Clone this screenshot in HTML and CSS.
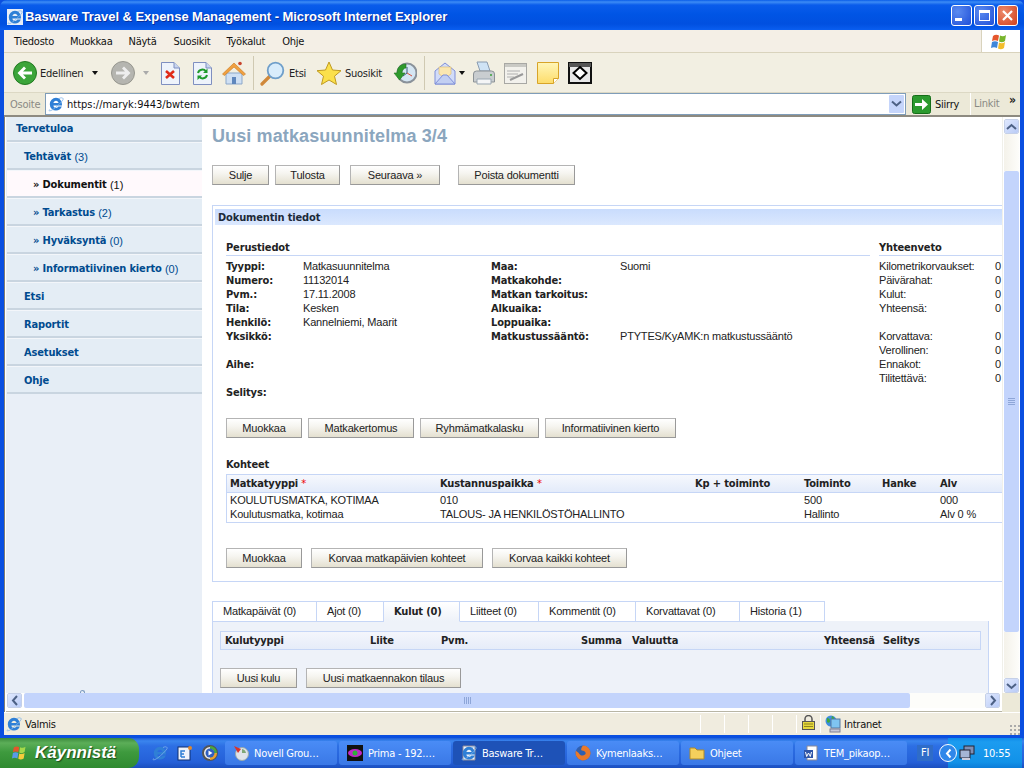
FILE: index.html
```html
<!DOCTYPE html>
<html lang="fi">
<head>
<meta charset="utf-8">
<title>Basware Travel &amp; Expense Management</title>
<link rel="stylesheet" href="styles.css">
</head>
<body>
<svg class="defs" width="0" height="0">
  <defs>
    <symbol id="ie" viewBox="0 0 16 16">
      <path fill-rule="evenodd" d="M8 1.800a6.200 6.200 0 0 0-6.200 6.400A6.200 6.200 0 0 0 8 14.500c2.800 0 4.900-1.500 5.800-4H10.400c-.5.900-1.300 1.400-2.400 1.400-1.500 0-2.500-1-2.600-2.500h8.600c.2-4.200-2.400-7.600-6-7.600zM5.400 7c.2-1.300 1.300-2.300 2.600-2.300S10.400 5.700 10.600 7z" fill="#2f7fd6"/>
      <path d="M1.500 13.500C0 15.800 3 15 6 12.700c3.500-2.600 7.500-6.500 9-9 .8-1.500-1-2.700-4-1.200" fill="none" stroke="#7fb4ea" stroke-width=".8"/>
    </symbol>
    <symbol id="doc" viewBox="0 0 19 23">
      <path d="M.5.500H13L18.500 6V22.500H.5z" fill="#eef3fb" stroke="#7f8fc0"/>
      <path d="M13 .5V6h5.500" fill="#c8d4ef" stroke="#7f8fc0"/>
    </symbol>
  </defs>
</svg>
<div class="desktop">
  <div class="window">
    <header class="titlebar">
      <svg class="title-icon"><use href="#ie"/></svg>
      <span class="title-text">Basware Travel &amp; Expense Management - Microsoft Internet Explorer</span>
      <div class="win-btns">
        <span class="wbtn"><i class="w-min"></i></span>
        <span class="wbtn"><i class="w-max"></i></span>
        <span class="wbtn wbtn-close"><svg width="13" height="13" viewBox="0 0 13 13"><path d="M2 2l9 9M11 2l-9 9" stroke="#fff" stroke-width="2.200"/></svg></span>
      </div>
    </header>
    <div class="chrome">
      <nav class="menubar">
        <span class="m1">Tiedosto</span><span class="m2">Muokkaa</span><span class="m3">Näytä</span><span class="m4">Suosikit</span><span class="m5">Työkalut</span><span class="m6">Ohje</span>
        <div class="flag">
          <svg width="22" height="20" viewBox="0 0 22 20"><path d="M3 4c2-1.500 4-1.500 6-.5L8 9C6 8 4 8 2 9z" fill="#e5562c"/><path d="M10 3.500c2 1 4 1 6-.5l-1 6c-2 1.500-4 1.500-6 .5z" fill="#78b52d"/><path d="M2 10c2-1 4-1 6 0l-1 6c-2-1-4-1-6 0z" fill="#3f86d9"/><path d="M9 10.500c2 1 4 1 6-.5l-1 6c-2 1.500-4 1.500-6 .5z" fill="#f3bd2c"/></svg>
        </div>
      </nav>
      <div class="toolbar">
        <svg class="t-back" width="24" height="24" viewBox="0 0 24 24"><circle cx="12" cy="12" r="11.500" fill="#3ca53a" stroke="#237a22"/><path d="M4.500 12l6.500-6.500 2 2L10 10.500h9v3h-9l3 3-2 2z" fill="#fff"/></svg>
        <span class="t-edellinen">Edellinen</span>
        <i class="caret t-c1"></i>
        <svg class="t-fwd" width="24" height="24" viewBox="0 0 24 24"><circle cx="12" cy="12" r="11.500" fill="#b5b5b0" stroke="#97978f"/><path d="M19.500 12L13 5.500l-2 2 3 3H5v3h9l-3 3 2 2z" fill="#eee"/></svg>
        <i class="caret caret-off t-c2"></i>
        <svg class="t-stop" width="19" height="23"><use href="#doc"/><path d="M5 9l8 7M13 9l-8 7" stroke="#e02a18" stroke-width="2.600"/></svg>
        <svg class="t-ref" width="19" height="23"><use href="#doc"/><path d="M5 11a4.500 4.500 0 0 1 8-1.500M14 13a4.500 4.500 0 0 1-8 1.500" fill="none" stroke="#1f9a2c" stroke-width="2"/><path d="M14.500 6.500v4.500H10zM4.500 18v-4.500H9z" fill="#1f9a2c"/></svg>
        <svg class="t-home" width="24" height="25" viewBox="0 0 24 25"><path d="M4 12v11h16V12z" fill="#cfe0f4" stroke="#8ba7c9"/><path d="M10 23v-7h4v7z" fill="#5f87bd"/><path d="M0.500 13L12 2l11.500 11-2 1.500L12 6 2.500 14.500z" fill="#f0a040" stroke="#c87820" stroke-width=".6"/><circle cx="18" cy="2.500" r="1.800" fill="#c8442c"/></svg>
        <i class="sep t-s1"></i>
        <svg class="t-search" width="25" height="25" viewBox="0 0 25 25"><path d="M2 23l8-8" stroke="#d0883a" stroke-width="3.200" stroke-linecap="round"/><circle cx="15.500" cy="9.500" r="7.800" fill="#d8ecfb" stroke="#6f9fca" stroke-width="1.800"/></svg>
        <span class="t-etsi">Etsi</span>
        <svg class="t-star" width="26" height="25" viewBox="0 0 26 25"><path d="M13 1l3.500 8 8.500.7-6.500 5.500 2 8.300L13 19l-7.500 4.500 2-8.300L1 9.700 9.500 9z" fill="#fbe04b" stroke="#c09a20"/></svg>
        <span class="t-suosikit">Suosikit</span>
        <svg class="t-hist" width="24" height="24" viewBox="0 0 24 24"><circle cx="14" cy="12" r="9.500" fill="#d5e6f3" stroke="#8a929a" stroke-width="2"/><path d="M14 6v6l-4 3" stroke="#3a5f7f" fill="none"/><path d="M14 12l5 3" stroke="#d8503c" fill="none"/><path d="M13 3C7 3 4 7 4 12H1l5.500 7 5.500-7H9c0-3 2-5 4-5z" fill="#2f9a2c" stroke="#1f7420" stroke-width=".6"/></svg>
        <i class="sep t-s2"></i>
        <svg class="t-mail" width="22" height="23" viewBox="0 0 22 23"><path d="M1 9l10-8 10 8v13H1z" fill="#d2dcf8" stroke="#7f8fd8"/><path d="M5 5h12v7l-6 4-6-4z" fill="#fbe7b0" stroke="#d8b870" stroke-width=".6"/><path d="M1 22l8-9h4l8 9z" fill="#c2cff2" stroke="#7f8fd8"/></svg>
        <i class="caret t-c3"></i>
        <svg class="t-print" width="24" height="25" viewBox="0 0 24 25"><path d="M5 1h10l3 9H8z" fill="#cfe3f5" stroke="#8a9bb0"/><path d="M1.500 13q0-3 3-3h15q3 0 3 3v8h-21z" fill="#c9cdd0" stroke="#8c9296"/><path d="M5 18h14v5H5z" fill="#f4f5f6" stroke="#9aa7b2"/><circle cx="19" cy="14" r="1" fill="#3aa03a"/></svg>
        <svg class="t-edit" width="23" height="21" viewBox="0 0 23 21"><rect x=".5" y=".5" width="22" height="20" fill="#f2f1ec" stroke="#a8a8a4"/><path d="M1 1h21v3H1z" fill="#c9c9c4"/><path d="M3 8h13M3 11h11M3 14h7" stroke="#b0b0b0"/><path d="M6 17l13-6" stroke="#999" stroke-width="2"/></svg>
        <svg class="t-note" width="22" height="22" viewBox="0 0 22 22"><defs><linearGradient id="ng" x1="0" y1="0" x2="0" y2="1"><stop offset="0" stop-color="#fff6b8"/><stop offset="1" stop-color="#fddc6a"/></linearGradient></defs><path d="M.5.500h21v16l-5 5H.5z" fill="url(#ng)" stroke="#d8a428"/><path d="M16.500 21.500v-5h5" fill="#fff" stroke="#d8a428"/></svg>
        <svg class="t-diamond" width="24" height="22" viewBox="0 0 24 22"><rect x="1" y="1" width="22" height="20" fill="#e8e8e8" stroke="#111" stroke-width="2"/><path d="M1 1h22v4H1z" fill="#555"/><path d="M12 5l6.500 6L12 17l-6.500-6z" fill="#fff" stroke="#000" stroke-width="2"/></svg>
      </div>
      <div class="addressbar">
        <span class="addr-label">Osoite</span>
        <div class="addr-input">
          <svg class="addr-icon"><use href="#ie"/></svg>
          <span class="addr-url">https://maryk:9443/bwtem</span>
          <span class="addr-drop"><svg width="11" height="8" viewBox="0 0 11 8"><path d="M1 1.500l4.500 4 4.500-4" fill="none" stroke="#4d6185" stroke-width="2"/></svg></span>
        </div>
        <svg class="go-icon" width="19" height="19" viewBox="0 0 19 19"><rect x=".5" y=".5" width="18" height="18" rx="2" fill="#2b9a2e" stroke="#156d18"/><path d="M3 8h7V4l6 5.500-6 5.500v-4H3z" fill="#fff"/></svg>
        <span class="go-text">Siirry</span>
        <span class="links">Linkit</span>
        <span class="links-more">»</span>
      </div>
    </div>
    <div class="viewport">
      <div class="view-main">
        <aside class="sidebar">
          <a class="side-item lvl0">Tervetuloa</a>
          <a class="side-item lvl1">Tehtävät <span>(3)</span></a>
          <a class="side-item lvl2 active">» Dokumentit <span>(1)</span></a>
          <a class="side-item lvl2">» Tarkastus <span>(2)</span></a>
          <a class="side-item lvl2">» Hyväksyntä <span>(0)</span></a>
          <a class="side-item lvl2">» Informatiivinen kierto <span>(0)</span></a>
          <a class="side-item lvl1">Etsi</a>
          <a class="side-item lvl1">Raportit</a>
          <a class="side-item lvl1">Asetukset</a>
          <a class="side-item lvl1">Ohje</a>
          <i class="side-foot"></i>
        </aside>
        <main class="content">
          <h1 class="page-title">Uusi matkasuunnitelma 3/4</h1>
          <div class="btn-row row-top">
            <button class="btn">Sulje</button><button class="btn">Tulosta</button><button class="btn">Seuraava »</button><button class="btn">Poista dokumentti</button>
          </div>
          <section class="panel">
            <h2 class="panel-head">Dokumentin tiedot</h2>
            <div class="panel-body">
              <div class="info">
                <div class="info-main">
                  <h3 class="sec-head">Perustiedot</h3>
                  <div class="fields">
                    <div class="fcol">
                      <b>Tyyppi:</b><span>Matkasuunnitelma</span>
                      <b>Numero:</b><span>11132014</span>
                      <b>Pvm.:</b><span>17.11.2008</span>
                      <b>Tila:</b><span>Kesken</span>
                      <b>Henkilö:</b><span>Kannelniemi, Maarit</span>
                      <b>Yksikkö:</b><span></span>
                      <b class="gap-row">Aihe:</b><span class="gap-row"></span>
                      <b class="gap-row">Selitys:</b><span class="gap-row"></span>
                    </div>
                    <div class="fcol fcol2">
                      <b>Maa:</b><span>Suomi</span>
                      <b>Matkakohde:</b><span></span>
                      <b>Matkan tarkoitus:</b><span></span>
                      <b>Alkuaika:</b><span></span>
                      <b>Loppuaika:</b><span></span>
                      <b>Matkustussääntö:</b><span>PTYTES/KyAMK:n matkustussääntö</span>
                    </div>
                  </div>
                </div>
                <div class="info-side">
                  <h3 class="sec-head">Yhteenveto</h3>
                  <div class="sum">
                    <span>Kilometrikorvaukset:</span><span>0</span>
                    <span>Päivärahat:</span><span>0</span>
                    <span>Kulut:</span><span>0</span>
                    <span>Yhteensä:</span><span>0</span>
                    <span class="gap-row">Korvattava:</span><span class="gap-row">0</span>
                    <span>Verollinen:</span><span>0</span>
                    <span>Ennakot:</span><span>0</span>
                    <span>Tilitettävä:</span><span>0</span>
                  </div>
                </div>
              </div>
              <div class="btn-row row-doc">
                <button class="btn">Muokkaa</button><button class="btn">Matkakertomus</button><button class="btn">Ryhmämatkalasku</button><button class="btn">Informatiivinen kierto</button>
              </div>
              <h3 class="items-head">Kohteet</h3>
              <div class="items">
                <div class="items-row items-th">
                  <span>Matkatyyppi <em>*</em></span><span>Kustannuspaikka <em>*</em></span><span>Kp + toiminto</span><span>Toiminto</span><span>Hanke</span><span>Alv</span>
                </div>
                <div class="items-row">
                  <span>KOULUTUSMATKA, KOTIMAA</span><span>010</span><span></span><span>500</span><span></span><span>000</span>
                </div>
                <div class="items-row">
                  <span>Koulutusmatka, kotimaa</span><span>TALOUS- JA HENKILÖSTÖHALLINTO</span><span></span><span>Hallinto</span><span></span><span>Alv 0 %</span>
                </div>
              </div>
              <div class="btn-row row-items">
                <button class="btn">Muokkaa</button><button class="btn">Korvaa matkapäivien kohteet</button><button class="btn">Korvaa kaikki kohteet</button>
              </div>
            </div>
          </section>
          <div class="tabs">
            <span class="tab">Matkapäivät (0)</span><span class="tab">Ajot (0)</span><span class="tab tab-on">Kulut (0)</span><span class="tab">Liitteet (0)</span><span class="tab">Kommentit (0)</span><span class="tab">Korvattavat (0)</span><span class="tab">Historia (1)</span>
          </div>
          <section class="tab-panel">
            <div class="cost-head">
              <span>Kulutyyppi</span><span>Liite</span><span>Pvm.</span><span>Summa</span><span>Valuutta</span><span>Yhteensä</span><span>Selitys</span>
            </div>
            <div class="btn-row row-cost">
              <button class="btn">Uusi kulu</button><button class="btn">Uusi matkaennakon tilaus</button>
            </div>
          </section>
        </main>
        <div class="vscroll">
          <span class="sb-btn"><svg width="11" height="8" viewBox="0 0 11 8"><path d="M1 6l4.500-4L10 6" fill="none" stroke="#4d6185" stroke-width="2"/></svg></span>
          <span class="v-track-a"></span>
          <span class="v-thumb"><i class="grip-h"></i></span>
          <span class="v-track-b"></span>
          <span class="sb-btn"><svg width="11" height="8" viewBox="0 0 11 8"><path d="M1 2l4.500 4L10 2" fill="none" stroke="#4d6185" stroke-width="2"/></svg></span>
        </div>
      </div>
      <div class="hscroll">
        <span class="sb-btn"><svg width="8" height="11" viewBox="0 0 8 11"><path d="M6 1L2 5.500 6 10" fill="none" stroke="#4d6185" stroke-width="2"/></svg></span>
        <span class="h-thumb"><i class="grip-v"></i></span>
        <span class="h-track"></span>
        <span class="sb-btn"><svg width="8" height="11" viewBox="0 0 8 11"><path d="M2 1l4 4.500L2 10" fill="none" stroke="#4d6185" stroke-width="2"/></svg></span>
        <span class="h-corner"></span>
      </div>
    </div>
    <footer class="statusbar">
      <svg class="st-ie"><use href="#ie"/></svg>
      <span class="st-text">Valmis</span>
      <i class="st-cell"></i><i class="st-cell"></i><i class="st-cell"></i><i class="st-cell"></i>
      <span class="st-lock"><svg width="13" height="15" viewBox="0 0 13 15"><path d="M3 7V4a3.500 3.500 0 0 1 7 0v3" fill="none" stroke="#555" stroke-width="1.500"/><rect x=".5" y="6.500" width="12" height="8" fill="#e6d83c" stroke="#555"/><path d="M2 9h9M2 11.500h9" stroke="#8d8420"/></svg></span>
      <span class="st-zone"><svg width="16" height="18" viewBox="0 0 16 18"><circle cx="6" cy="6" r="5.500" fill="#3f8ee0"/><path d="M2 3c2 0 3 1 3 3S3 8 2 7zM7 1c2 1 3 2 2 4-2 0-3-1-2-4z" fill="#3fa83c"/><rect x="6" y="4" width="9" height="9" fill="#7fc4f2" stroke="#5577a0"/><rect x="5" y="14" width="10" height="3" fill="#c9c9d8" stroke="#7f7f95"/></svg>Intranet</span>
      <span class="st-grip"></span>
    </footer>
  </div>
  <div class="taskbar">
    <div class="start">
      <svg width="20" height="18" viewBox="0 0 22 20"><path d="M3 4c2-1.500 4-1.500 6-.5L8 9C6 8 4 8 2 9z" fill="#e5562c"/><path d="M10 3.500c2 1 4 1 6-.5l-1 6c-2 1.500-4 1.500-6 .5z" fill="#a5d84a"/><path d="M2 10c2-1 4-1 6 0l-1 6c-2-1-4-1-6 0z" fill="#5a9ae8"/><path d="M9 10.500c2 1 4 1 6-.5l-1 6c-2 1.500-4 1.500-6 .5z" fill="#f6cc3c"/></svg>
      <span>Käynnistä</span>
    </div>
    <div class="quick">
      <svg width="16" height="16"><use href="#ie"/></svg>
      <svg width="16" height="16" viewBox="0 0 16 16"><rect x="1" y="2" width="12" height="13" fill="#eef3fb" stroke="#0f2f70"/><path d="M4 12V6h4M4 9h3M4 12h4" stroke="#2f7fd6" stroke-width="1.500" fill="none"/><circle cx="13" cy="3" r="2" fill="#e08a2c"/></svg>
      <svg width="16" height="16" viewBox="0 0 16 16"><circle cx="8" cy="8" r="7" fill="#eee" stroke="#555" stroke-width="2"/><path d="M8 1a7 7 0 0 1 7 7h-3a4 4 0 0 0-4-4z" fill="#4aa83c"/><path d="M15 8a7 7 0 0 1-7 7v-3a4 4 0 0 0 4-4z" fill="#e8a02c"/><circle cx="8" cy="8" r="4.500" fill="#2f5fc0"/><path d="M6.500 5.500l4 2.500-4 2.500z" fill="#fff"/></svg>
    </div>
    <div class="tasks">
      <span class="task"><svg width="16" height="16" viewBox="0 0 16 16"><circle cx="9" cy="9" r="6.500" fill="#dfe4ea" stroke="#9aa"/><path d="M9 4a5 5 0 0 1 4 4H9z" fill="#7fa878"/><path d="M1 1l7 3-3 4z" fill="#d8332a"/></svg><b>Novell Grou…</b></span>
      <span class="task"><svg width="16" height="16" viewBox="0 0 16 16"><rect width="16" height="16" fill="#111"/><ellipse cx="8" cy="8" rx="7" ry="4" fill="#c028c8"/><circle cx="8" cy="8" r="2.500" fill="#2fb03a"/></svg><b>Prima - 192.…</b></span>
      <span class="task task-on"><svg width="16" height="16" viewBox="0 0 16 16"><path d="M2 1h12v14H2z" fill="#eef3fb" stroke="#889"/><use href="#ie"/></svg><b>Basware Tr…</b></span>
      <span class="task"><svg width="16" height="16" viewBox="0 0 16 16"><circle cx="8" cy="8" r="7.500" fill="#2f5fb0"/><path d="M8 .5a7.500 7.500 0 1 1-7 5c1 2 2 1 3 3s4 3 6 1-1-4-3-4 0-4 1-5z" fill="#e9792a"/></svg><b>Kymenlaaks…</b></span>
      <span class="task"><svg width="16" height="16" viewBox="0 0 16 16"><path d="M1 3h5l2 2h7v9H1z" fill="#f4cf5c" stroke="#b08a28"/></svg><b>Ohjeet</b></span>
      <span class="task"><svg width="16" height="16" viewBox="0 0 16 16"><path d="M4 1h10v14H4z" fill="#fff" stroke="#889"/><rect x="1" y="5" width="9" height="8" fill="#2f55a8"/><path d="M2.500 7l1.200 4.500L5.500 8l1.800 3.500L8.500 7" fill="none" stroke="#fff"/></svg><b>TEM_pikaop…</b></span>
    </div>
    <span class="lang">FI</span>
    <span class="chev"><svg width="9" height="11" viewBox="0 0 9 11"><path d="M6.500 1.500L3 5.500l3.500 4" fill="none" stroke="#fff" stroke-width="2"/></svg></span>
    <div class="tray">
      <svg width="16" height="16" viewBox="0 0 16 16"><rect x="5" y="1" width="10" height="8" fill="#7f8fb5" stroke="#223"/><rect x="1" y="5" width="10" height="8" fill="#a5b5d5" stroke="#223"/><rect x="3" y="13" width="8" height="2" fill="#ccd"/></svg>
      <span>10:55</span>
    </div>
  </div>
</div>
</body>
</html>
```

FILE: styles.css
```css
* { box-sizing: border-box; }
html, body { margin: 0; padding: 0; }
body {
  width: 1024px;
  height: 768px;
  overflow: hidden;
  font-family: "Liberation Sans", sans-serif;
  font-size: 11px;
  letter-spacing: -.18px;
  color: #222;
}
.defs { display: block; height: 0; }
.desktop { display: flex; flex-direction: column; height: 768px; }

/* shared type: bold labels and browser chrome use the condensed face */
.panel-head, .sec-head, .fcol b, .items-head, .items-th, .tab-on, .cost-head, .side-item {
  font-family: "DejaVu Sans Condensed", "Liberation Sans", sans-serif;
  font-weight: bold;
  letter-spacing: -.15px;
}
.chrome, .statusbar, .taskbar {
  font-family: "DejaVu Sans Condensed", "Liberation Sans", sans-serif;
  letter-spacing: -.25px;
}

/* window frame */
.window {
  height: 738px;
  display: flex;
  flex-direction: column;
  background: #0a4fe0;
  padding: 0 4px 3px 4px;
}
.titlebar {
  height: 30px;
  margin: 0 -4px;
  padding: 3px 6px 0 7px;
  flex: none;
  display: flex;
  align-items: center;
  border-radius: 7px 7px 0 0;
  background: linear-gradient(#0a5de8 0, #3d8cf5 2px, #0a5ceb 5px, #0055e5 14px, #0150e0 24px, #0a5ef0 30px);
}
.title-icon { width: 16px; height: 16px; flex: none; background: #e8eef8; }
.title-text {
  margin-left: 2px;
  font: bold 13px "Liberation Sans", sans-serif;
  letter-spacing: -.05px;
  color: #fff;
  text-shadow: 1px 1px 0 #0a2f9c;
  white-space: nowrap;
}
.win-btns { margin-left: auto; display: flex; gap: 2px; margin-top: -3px; }
.wbtn {
  width: 21px;
  height: 21px;
  border: 1px solid #fff;
  border-radius: 3px;
  background: radial-gradient(circle at 30% 30%, #5b8bf0, #1f4fd8);
  display: flex;
  align-items: center;
  justify-content: center;
}
.wbtn-close { background: radial-gradient(circle at 30% 30%, #ec8a6c, #d2401c); }
.w-min { width: 7px; height: 3px; background: #fff; margin: 9px 7px 0 0; }
.w-max { width: 11px; height: 11px; border: 1px solid #fff; border-top-width: 3px; }
.chrome { flex: none; background: #f1eee0; }

/* menu */
.menubar {
  height: 23px;
  display: flex;
  align-items: center;
  background: #f4efe6;
  border-bottom: 1px solid #d9d3bd;
}
.menubar span { white-space: nowrap; color: #111; }
.m1 { margin-left: 10px; }
.m2 { margin-left: 16px; }
.m3 { margin-left: 16px; }
.m4 { margin-left: 17px; }
.m5 { margin-left: 16px; }
.m6 { margin-left: 17px; }
.flag {
  margin-left: auto;
  width: 39px;
  height: 22px;
  background: #fff;
  display: flex;
  align-items: center;
  justify-content: center;
  padding-top: 1px;
  border-left: 1px solid #d9d3bd;
}

/* toolbar */
.toolbar {
  height: 40px;
  display: flex;
  align-items: center;
  padding-top: 1px;
  background: #f2efe2;
  border-bottom: 1px solid #dcd8c4;
  color: #222;
}
.toolbar svg, .toolbar i { flex: none; }
.caret { width: 0; height: 0; border: 3.500px solid transparent; border-top: 4px solid #111; border-bottom: 0; }
.caret-off { border-top-color: #aaa; }
.sep { width: 1px; height: 34px; background: #cfc9b2; }
.t-back { margin-left: 9px; }
.t-edellinen { margin-left: 3px; width: 44px; }
.t-c1 { margin-left: 8px; }
.t-fwd { margin-left: 13px; }
.t-c2 { margin-left: 8px; }
.t-stop { margin-left: 12px; }
.t-ref { margin-left: 13px; }
.t-home { margin-left: 10px; }
.t-s1 { margin-left: 7px; }
.t-search { margin-left: 6px; }
.t-etsi { margin-left: 4px; width: 20px; }
.t-star { margin-left: 7px; }
.t-suosikit { margin-left: 3px; width: 38px; }
.t-hist { margin-left: 10px; }
.t-s2 { margin-left: 7px; }
.t-mail { margin-left: 9px; }
.t-c3 { margin-left: 3px; }
.t-print { margin-left: 7px; }
.t-edit { margin-left: 8px; }
.t-note { margin-left: 10px; }
.t-diamond { margin-left: 9px; }

/* address */
.addressbar {
  height: 24px;
  display: flex;
  align-items: center;
  background: #ece9d8;
  border-bottom: 2px solid #8d8a80;
}
.addr-label { margin-left: 6px; width: 35px; color: #8a8a84; }
.addr-input {
  width: 861px;
  height: 22px;
  display: flex;
  align-items: center;
  background: #fff;
  border: 1px solid #7f9db9;
  padding: 0 1px 0 2px;
}
.addr-icon { width: 16px; height: 16px; flex: none; }
.addr-url { margin-left: 3px; color: #111; letter-spacing: 0; }
.addr-drop {
  margin-left: auto;
  width: 15px;
  height: 18px;
  display: flex;
  align-items: center;
  justify-content: center;
  background: #c5d5fb;
  border-radius: 1px;
}
.go-icon { margin-left: 6px; flex: none; }
.go-text { margin-left: 4px; width: 35px; color: #111; }
.links { padding-left: 3px; border-left: 1px solid #fff; height: 22px; line-height: 22px; color: #8a8a84; width: 38px; }
.links-more { font-weight: bold; font-size: 12px; line-height: 10px; align-self: flex-start; margin: 2px 0 0 1px; }

/* viewport */
.viewport { flex: 1; min-height: 0; display: flex; flex-direction: column; background: #fff; padding-left: 1px; border-left: 1px solid #807e74; }
.view-main { flex: 1; min-height: 0; display: flex; }
.sidebar {
  width: 196px;
  flex: none;
  background: #e9eff7;
  display: flex;
  flex-direction: column;
  overflow: hidden;
  color: #004b8f;
}
.side-item {
  height: 28px;
  flex: none;
  display: flex;
  align-items: center;
  margin-left: 1px;
  padding-top: 2px;
  white-space: pre;
  background: #e4edf5;
  border-top: 1px solid #f3f6fa;
  border-bottom: 2px solid #c9d5e0;
}
.side-item span { font: 11px "Liberation Sans", sans-serif; letter-spacing: 0; }
.lvl0 { height: 25px; padding-left: 9px; padding-top: 0; border-top: 0; }
.lvl1 { padding-left: 17px; }
.lvl2 { padding-left: 26px; }
.active { background: #fff9fc; color: #111; }
.side-foot { margin-top: auto; margin-left: 74px; width: 5px; height: 3px; border: 1px solid #7f9cc0; border-bottom: 0; border-radius: 3px 3px 0 0; }

.content { width: 800px; flex: none; overflow: hidden; padding-left: 10px; }
.page-title {
  margin: 8px 0 0;
  height: 23px;
  font: bold 18px/23px "Liberation Sans", sans-serif;
  letter-spacing: .12px;
  color: #8ba6be;
  white-space: nowrap;
}
.btn-row { display: grid; grid-auto-flow: column; justify-content: start; height: 20px; }
.btn-row .btn { justify-self: end; }
.row-top { margin-top: 17px; grid-template-columns: 57px 65px 94px 129px; column-gap: 6px; }
.row-top .btn:nth-child(3) { width: 90px; }
.row-top .btn:nth-child(4) { width: 117px; }
.row-doc { grid-template-columns: 76px 106px 119px 131px; column-gap: 6px; }
.row-items { margin-top: 25px; grid-template-columns: 76px 172px 135px; column-gap: 9px; }
.row-cost { margin-top: 18px; grid-template-columns: 77px 155px; column-gap: 9px; }
.btn {
  width: 100%;
  height: 20px;
  padding: 0;
  font: inherit;
  letter-spacing: inherit;
  color: #222;
  white-space: nowrap;
  background: linear-gradient(#fff 0, #f6f5f0 40%, #e4e0d0 100%);
  border: 1px solid #b4b4b4;
  border-right-color: #999;
  border-bottom-color: #999;
}

.panel { margin-top: 20px; width: 800px; height: 377px; border: 1px solid #c6d6f6; border-right: 0; padding-top: 3px; }
.panel-head {
  margin: 0 0 0 2px;
  height: 16px;
  padding-left: 3px;
  font-size: 11px;
  line-height: 17px;
  color: #1c2a3a;
  background: linear-gradient(#c9dcfd, #dbe8fe);
}
.panel-body { padding: 0 0 0 13px; overflow: hidden; }
.info { display: flex; margin-top: 14px; height: 179px; }
.info-main { width: 644px; flex: none; }
.info-side { width: 124px; margin-left: 9px; flex: none; }
.sec-head {
  margin: 0;
  height: 17px;
  font-size: 11px;
  line-height: 18px;
  border-bottom: 1px solid #c6d6f6;
  color: #222;
}
.fields { display: flex; margin-top: 4px; }
.fcol { width: 265px; flex: none; display: grid; grid-template-columns: 77px 1fr; grid-auto-rows: 14px; line-height: 14px; white-space: nowrap; }
.fcol2 { width: 379px; grid-template-columns: 129px 1fr; }
.fcol b { color: #222; }
.fcol span { margin-top: -1px; }
.fcol .gap-row { grid-row-end: span 2; margin-top: 14px; }
.sum { margin-top: 3px; display: grid; grid-template-columns: 116px 8px; grid-auto-rows: 14px; line-height: 14px; white-space: nowrap; }
.sum .gap-row { grid-row-end: span 2; align-self: end; height: 14px; }
.items-head { margin: 18px 0 0; height: 18px; font-size: 11px; line-height: 18px; }
.items { width: 790px; height: 49px; border: 1px solid #c6d6f6; border-right: 0; }
.items-row { display: grid; grid-template-columns: 210px 255px 109px 78px 58px 80px; padding-left: 3px; height: 14px; line-height: 14px; white-space: nowrap; }
.items-th { height: 18px; line-height: 17px; background: linear-gradient(#f6f8fd, #e3ebfa); border-bottom: 1px solid #c6d6f6; }
.items-th em { font-style: normal; color: #e00; font-weight: normal; }
.tabs { margin-top: 19px; display: grid; grid-template-columns: 105px 67px 76px 79px 97px 104px 85px; justify-content: start; height: 20px; }
.tab {
  border: 1px solid #c6d6f6;
  border-left: 0;
  padding-left: 10px;
  line-height: 19px;
  white-space: nowrap;
  background: #fff;
}
.tab:first-child { border-left: 1px solid #c6d6f6; }
.tab-on { background: linear-gradient(#fff, #eef2f9); border-bottom-color: #eef2f9; }
.tab-panel { width: 777px; height: 80px; background: #eef2f9; border: 1px solid #c6d6f6; border-top: 0; padding: 10px 7px 0; }
.cost-head {
  display: grid;
  grid-template-columns: 145px 71px 140px 51px 192px 59px 1fr;
  height: 19px;
  line-height: 17px;
  padding-left: 4px;
  white-space: nowrap;
  border: 1px solid #c6d6f6;
  background: linear-gradient(#f4f6fc, #e6ecf9);
}

/* scrollbars */
.vscroll { width: 18px; flex: none; display: flex; flex-direction: column; align-items: center; padding: 2px 1px 0 0; background: #fff; border-left: 1px solid #f0f0ea; }
.sb-btn {
  width: 15px;
  height: 15px;
  flex: none;
  background: linear-gradient(135deg, #dfe8fe, #b9cbf6);
  border: 1px solid #fff;
  outline: 1px solid #c5d0e8;
  outline-offset: -1px;
  display: flex;
  align-items: center;
  justify-content: center;
  border-radius: 2px;
}
.v-track-a { height: 37px; width: 15px; flex: none; background: linear-gradient(90deg, #f4f2ea, #fdfdfa); }
.v-track-b { flex: 1; width: 15px; background: linear-gradient(90deg, #f4f2ea, #fdfdfa); }
.v-thumb { height: 461px; width: 15px; flex: none; background: #c3d4fc; border-radius: 2px; display: flex; align-items: center; justify-content: center; }
.grip-h { width: 7px; height: 7px; background: repeating-linear-gradient(#8ea6d8 0 1px, transparent 1px 2px); }
.grip-v { width: 7px; height: 7px; background: repeating-linear-gradient(90deg, #8ea6d8 0 1px, transparent 1px 2px); }
.hscroll { height: 19px; flex: none; display: flex; align-items: center; padding: 0 0 3px 1px; background: #fff; border-bottom: 1px solid #b8b5a5; }
.h-thumb { width: 886px; margin-left: 2px; height: 15px; background: #c3d4fc; border-radius: 2px; display: flex; align-items: center; justify-content: center; }
.h-track { width: 75px; height: 15px; background: #fdfdfa; }
.h-corner { width: 18px; height: 19px; margin-left: 2px; background: #ece9d8; margin-bottom: -3px; }

/* status */
.statusbar { height: 23px; flex: none; display: flex; align-items: center; background: #f0ecdf; color: #111; padding-left: 2px; border-top: 1px solid #fff; }
.st-ie { width: 16px; height: 16px; flex: none; }
.st-text { margin-left: 3px; width: 675px; flex: none; }
.st-cell { width: 24px; height: 18px; border-left: 1px solid #fff; flex: none; }
.st-lock { width: 24px; height: 18px; border-left: 1px solid #fff; flex: none; display: flex; justify-content: center; }
.st-zone { width: 189px; height: 18px; border-left: 1px solid #fff; display: flex; align-items: center; gap: 3px; padding-left: 4px; flex: none; }
.st-grip { width: 11px; height: 11px; align-self: flex-end; margin-left: auto; background: radial-gradient(circle, #aaa 1px, transparent 1.200px) 0 0 / 4px 4px; }

/* taskbar */
.taskbar {
  height: 30px;
  flex: none;
  display: flex;
  align-items: center;
  background: linear-gradient(#1f5fd8 0, #3a85ee 3px, #2d6fe4 8px, #2560d8 24px, #1b4fbf 30px);
}
.start {
  width: 139px;
  height: 30px;
  flex: none;
  display: flex;
  align-items: center;
  gap: 4px;
  padding-left: 11px;
  border-radius: 0 11px 11px 0;
  background: linear-gradient(#3b8a3c 0, #5cae58 5px, #3e9a3e 14px, #2f8a30 30px);
  color: #fff;
  font: italic bold 17px "Liberation Sans", sans-serif;
  letter-spacing: 0;
  text-shadow: 1px 1px 1px #1a4a1a;
}
.quick { width: 86px; flex: none; display: flex; gap: 9px; padding-left: 13px; align-items: center; }
.tasks { display: flex; gap: 2px; flex: none; }
.task {
  width: 112px;
  height: 24px;
  display: flex;
  align-items: center;
  gap: 5px;
  padding-left: 8px;
  border-radius: 3px;
  background: linear-gradient(#4a8cf6, #3a78e6);
  color: #fff;
  font-size: 11px;
  white-space: nowrap;
}
.task b { font-weight: normal; }
.task-on { background: #1e52b7; }
.lang { margin-left: 10px; width: 16px; height: 16px; background: #2f6cc8; color: #fff; text-align: center; line-height: 16px; flex: none; }
.chev { margin-left: 6px; width: 18px; height: 18px; border-radius: 50%; flex: none; background: #2f87ea; border: 1.500px solid #fff; display: flex; align-items: center; justify-content: center; position: relative; z-index: 1; }
.tray {
  margin-left: -9px;
  width: 74px;
  height: 30px;
  flex: none;
  display: flex;
  align-items: center;
  gap: 8px;
  padding-left: 11px;
  background: linear-gradient(#0f8be8 0, #1c9cf0 4px, #1292e8 24px, #0c7cd8 30px);
  color: #fff;
  font-size: 11px;
}
```
